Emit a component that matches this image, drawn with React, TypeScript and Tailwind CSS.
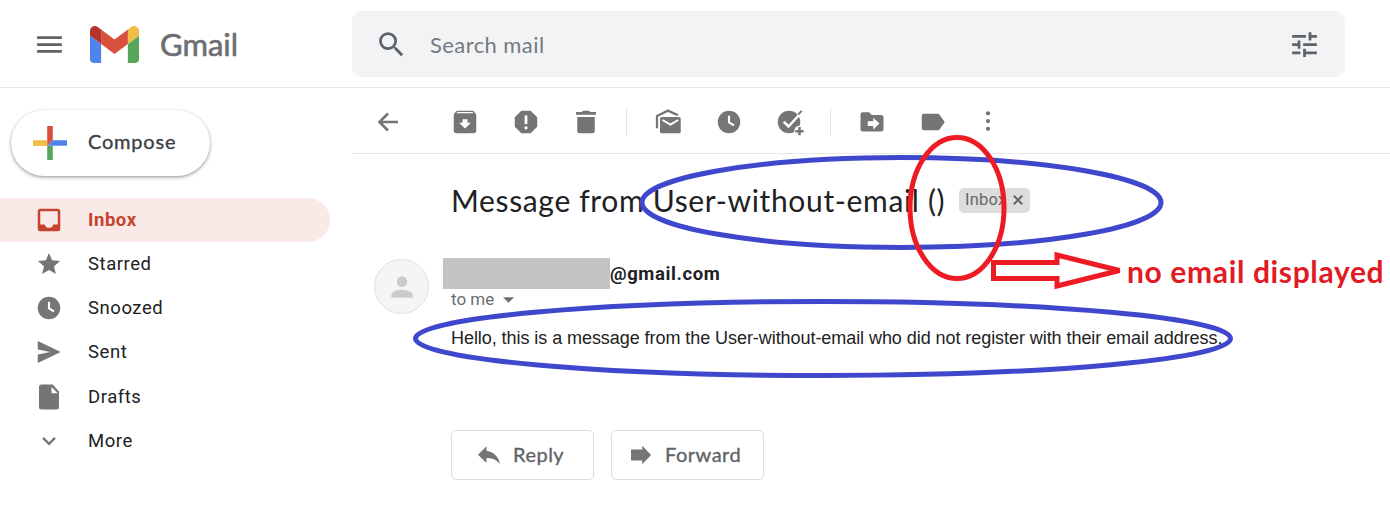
import type { ReactNode } from "react";

type IconProps = { className?: string; children: ReactNode };

function Icon({ className = "size-[30px]", children }: IconProps) {
  return (
    <svg viewBox="0 0 24 24" fill="currentColor" className={`shrink-0 ${className}`} aria-hidden="true">
      {children}
    </svg>
  );
}

const clock = (
  <>
    <circle cx="12" cy="12" r="9" />
    <path d="M12 7v5.3l4 2.4" fill="none" stroke="#fff" strokeWidth="1.7" />
  </>
);

function GmailLogo() {
  return (
    <svg viewBox="52 42 88 66" className="ml-7 h-[37px] w-[49px] shrink-0" aria-hidden="true">
      <path fill="#5084ed" d="M58 108h14V74L52 59v43c0 3.32 2.69 6 6 6" />
      <path fill="#57a55a" d="M120 108h14c3.32 0 6-2.69 6-6V59l-20 15" />
      <path fill="#efbe47" d="M120 48v26l20-15v-8c0-7.42-8.47-11.65-14.4-7.2" />
      <path fill="#d9503f" d="M72 74V48l24 18 24-18v26L96 92" />
      <path fill="#b3342a" d="M52 51v8l20 15V48l-5.6-4.2c-5.94-4.45-14.4-.22-14.4 7.2" />
    </svg>
  );
}

function Header() {
  return (
    <header className="flex h-[88px] shrink-0 items-start border-b border-[#e9e9e9]">
      <div className="flex h-[88px] w-[352px] shrink-0 items-center pl-[33px]">
        <Icon className="size-[33px] text-[#5f6368]">
          <path d="M3 18h18v-2H3v2zm0-5h18v-2H3v2zm0-7v2h18V6H3z" />
        </Icon>
        <div className="-ml-1 flex items-center">
          <GmailLogo />
          <span className="ml-[21px] font-['Lato'] text-[31px] leading-10 text-[#6b6e73] [-webkit-text-stroke:0.6px]">Gmail</span>
        </div>
      </div>
      <div className="mt-[11px] flex h-[66px] w-[993px] items-center rounded-[10px] bg-[#f1f3f4] pr-6 pl-[23px]">
        <Icon className="size-[33px] text-[#5f6368]">
          <path d="M15.5 14h-.79l-.28-.27A6.471 6.471 0 0 0 16 9.5 6.5 6.5 0 1 0 9.5 16c1.61 0 3.09-.59 4.23-1.57l.27.28v.79l5 4.99L20.49 19l-4.99-5zm-6 0C7.01 14 5 11.99 5 9.5S7.01 5 9.5 5 14 7.01 14 9.5 11.99 14 9.5 14z" />
        </Icon>
        <span className="ml-[22px] flex-1 font-['Lato'] text-[22px] tracking-[0.42px] text-[#777a7e]">Search mail</span>
        <Icon className="size-[33px] text-[#5f6368]">
          <path d="M3 17v2h6v-2H3zM3 5v2h10V5H3zm10 16v-2h8v-2h-8v-2h-2v6h2zM7 9v2H3v2h4v2h2V9H7zm14 4v-2H11v2h10zm-6-4h2V7h4V5h-4V3h-2v6z" />
        </Icon>
      </div>
    </header>
  );
}

const navItems: { label: string; icon: ReactNode }[] = [
  { label: "Starred", icon: <path d="M12 17.27 18.18 21l-1.64-7.03L22 9.24l-7.19-.61L12 2 9.19 8.63 2 9.24l5.46 4.73L5.82 21z" transform="translate(1.3 1.4) scale(.89)" /> },
  { label: "Snoozed", icon: clock },
  { label: "Sent", icon: <path d="M3 3.2 21.4 12 3 20.8V14l10-2-10-2z" /> },
  { label: "Drafts", icon: <path fillRule="evenodd" d="M6 2h9l5 5.5V20a2 2 0 0 1-2 2H6a2 2 0 0 1-2-2V4a2 2 0 0 1 2-2zm8 2v5h5z" /> },
  { label: "More", icon: <path d="M7.2 9.5 12 14.2l4.8-4.7" fill="none" stroke="currentColor" strokeWidth="1.9" /> },
];

function Sidebar() {
  return (
    <aside className="w-[352px] shrink-0 pt-[22px]">
      <button className="ml-[11px] flex h-[66px] w-[199px] items-center rounded-full bg-white pl-[22px] shadow-[0_1px_3px_rgba(60,64,67,.45),0_2px_4px_rgba(60,64,67,.15)]">
        <svg viewBox="0 0 34 34" className="size-[34px]" aria-hidden="true">
          <path fill="#d9503f" d="M14.2 0h5.6v14.2L14.2 20z" />
          <path fill="#efbe47" d="M0 14.2h14.2V20H0z" />
          <path fill="#57a55a" d="M14.2 19.8h5.6V34h-5.6z" />
          <path fill="#5084ed" d="M19.8 14.2H34v5.6H14.2z" />
        </svg>
        <span className="mb-1 ml-[21px] font-['Lato'] text-[20px] tracking-[0.8px] text-[#3c4043] [-webkit-text-stroke:0.35px]">Compose</span>
      </button>
      <nav className="mt-[22px] font-['Roboto'] text-[18.5px] leading-7 tracking-[0.55px] text-[#202124]">
        <div className="flex h-11 w-[330px] items-center rounded-r-full bg-[#f9e9e7] pl-[34px] font-bold text-[#c5442f]">
          <Icon>
            <path fillRule="evenodd" d="M5 3h14a2 2 0 0 1 2 2v14a2 2 0 0 1-2 2H5a2 2 0 0 1-2-2V5a2 2 0 0 1 2-2zm0 2v10.5h3.6a3.5 3.5 0 0 0 6.8 0H19V5z" />
          </Icon>
          <span className="ml-6">Inbox</span>
        </div>
        {navItems.map((item) => (
          <div key={item.label} className="flex h-[44.2px] items-center pl-[34px]">
            <Icon className="size-[30px] text-[#757575]">{item.icon}</Icon>
            <span className="ml-6">{item.label}</span>
          </div>
        ))}
      </nav>
    </aside>
  );
}

function Toolbar() {
  return (
    <div className="flex h-[66px] shrink-0 items-center border-b border-[#e9e9e9] pt-0.5 pl-[21px] text-[#757575]">
      <Icon>
        <path d="M20 12H5.5M12 5.200 5.200 12l6.800 6.800" fill="none" stroke="currentColor" strokeWidth="2.1" />
      </Icon>
      <Icon className="ml-[47px] size-[30px]">
        <path fillRule="evenodd" d="M20.54 5.23l-1.39-1.68C18.88 3.21 18.47 3 18 3H6c-.47 0-.88.21-1.16.55L3.46 5.23C3.17 5.57 3 6.02 3 6.5V19c0 1.1.9 2 2 2h14c1.1 0 2-.9 2-2V6.5c0-.48-.17-.93-.46-1.27zM12 17.2 7.2 12.5H10V9.8h4v2.7h2.8zM5.12 5l.81-1h12l.94 1z" />
      </Icon>
      <Icon className="ml-[30.5px] size-[30px]">
        <path stroke="currentColor" strokeWidth="1.6" strokeLinejoin="round" d="M8.6 3.8h6.8l4.8 4.8v6.8l-4.8 4.8H8.6l-4.8-4.8V8.6z" />
        <path fill="#fff" d="M10.9 6.7h2.2v7h-2.2z" />
        <circle cx="12" cy="16.6" r="1.3" fill="#fff" />
      </Icon>
      <Icon className="ml-[30.5px] size-[30px]">
        <path d="M4 4h4.6l1-1h4.8l1 1H20v2.2H4zM5 8h14v11a2 2 0 0 1-2 2H7a2 2 0 0 1-2-2z" />
      </Icon>
      <span className="ml-[25px] h-7 w-px bg-[#e6e6e6]" />
      <Icon className="ml-[26px] size-[30px]">
        <path d="M3.2 17V7.2L12 2.9l8 3.8" fill="none" stroke="currentColor" strokeWidth="1.8" strokeLinejoin="round" />
        <rect x="4.6" y="7" width="18.6" height="15" rx="2.4" fill="#fff" />
        <rect x="5.6" y="8" width="16.6" height="13" rx="1.5" />
        <path d="m7.6 10.4 6.3 3.7 6.3-3.7" fill="none" stroke="#fff" strokeWidth="1.6" />
      </Icon>
      <Icon className="ml-[31px] size-[30px]">{clock}</Icon>
      <Icon className="ml-[31px] size-[30px] overflow-visible">
        <circle cx="11.2" cy="12" r="9" />
        <path d="m7 11.8 3.800 3.800L21.500 4" fill="none" stroke="#fff" strokeWidth="2" />
        <path d="m18.600 6 2.800-2.900" fill="none" stroke="currentColor" strokeWidth="1.5" />
        <circle cx="19.6" cy="19.2" r="4.2" fill="#fff" />
        <path d="M19.6 16v6.6M16.3 19.3h6.6" fill="none" stroke="currentColor" strokeWidth="2" />
      </Icon>
      <span className="ml-[25px] h-7 w-px bg-[#e6e6e6]" />
      <Icon className="ml-[26px] size-[30px]">
        <path d="M4.6 4.2h5l2.200 2.200h7.600A1.800 1.800 0 0 1 21.200 8v10a1.800 1.800 0 0 1-1.800 1.600H4.600A1.800 1.800 0 0 1 2.800 18V6a1.800 1.800 0 0 1 1.800-1.800z" />
        <path fill="#fff" d="M8.600 11.300h4.400V8.500l5 4.700-5 4.700v-2.800H8.600z" />
      </Icon>
      <Icon className="ml-[31px] size-[30px]">
        <path d="M4.600 5.400h11.200c.6 0 1.100.3 1.400.7L21.400 12l-4.200 5.900c-.3.4-.8.7-1.400.7H4.600A1.700 1.700 0 0 1 3 17V7a1.700 1.700 0 0 1 1.600-1.600z" />
      </Icon>
      <Icon className="mb-0.5 ml-[25px] size-[30px]">
        <circle cx="12" cy="5.8" r="1.7" />
        <circle cx="12" cy="12" r="1.7" />
        <circle cx="12" cy="18.2" r="1.7" />
      </Icon>
    </div>
  );
}

function Message() {
  return (
    <main className="flex flex-col">
      <div className="mt-[23px] flex h-[46px] items-center pl-[99px]">
        <h1 className="w-[494px] font-['Lato'] text-[30px] tracking-[0.65px] whitespace-nowrap text-[#202124]">Message from User-without-email ()</h1>
        <span className="ml-3.5 flex h-[25px] w-[71px] items-center gap-[7px] rounded-[5px] bg-[#dddddd] pl-1.5 font-['Roboto'] text-[16.5px] tracking-[0.2px] text-[#666]">
          <span>Inbox</span>
          <svg viewBox="0 0 10 10" className="size-2.5" aria-hidden="true">
            <path d="m.8.8 8.400 8.400M9.200.8.8 9.200" stroke="#666" strokeWidth="2" />
          </svg>
        </span>
      </div>
      <section className="mt-[35px] flex pl-[22px]">
        <div className="mt-px flex size-[55px] shrink-0 items-center justify-center rounded-full border border-[#e0e0e0] bg-[#f5f5f5] text-[#cbcbcb]">
          <Icon className="size-[32px]">
            <path d="M12 12a4 4 0 1 0 0-8 4 4 0 0 0 0 8zm0 2c-2.670 0-8 1.340-8 4v2h16v-2c0-2.660-5.330-4-8-4z" />
          </Icon>
        </div>
        <div className="ml-3.5 flex flex-col">
          <div className="flex h-[30px] items-center">
            <span className="h-[31px] w-[167px] bg-[#c3c3c3]" />
            <span className="pt-0.5 font-['Roboto'] text-[18.5px] leading-7 font-bold tracking-[0.6px] text-[#202124]">@gmail.com</span>
          </div>
          <div className="flex h-6 items-center gap-[9px] pl-2 font-['Roboto'] text-[17px] text-[#6a6d70]">
            <span>to me</span>
            <svg viewBox="0 0 10 5" className="h-[6px] w-[11px]" aria-hidden="true"><path d="M0 0h10L5 5z" fill="#6a6d70" /></svg>
          </div>
          <p className="mt-[14px] pl-2 font-['Liberation_Sans'] text-[18px] leading-6 tracking-[-0.06px] whitespace-nowrap text-[#222]">Hello, this is a message from the User-without-email who did not register with their email address.</p>
        </div>
      </section>
      <div className="mt-20 flex gap-[17px] pl-[99px] font-['Lato'] text-[20px] tracking-[0.5px] text-[#5f6368] [-webkit-text-stroke:0.35px]">
        <button className="flex h-[50px] w-[143px] items-center rounded-[5px] border border-[#dadce0] pl-[21px]">
          <Icon className="size-[30px] text-[#757575]">
            <path stroke="none" d="M10.800 8.600V5L4 11.800l6.800 6.600v-4c4.600-.4 7.800 1.200 10.800 4.800-1.200-5.800-4.800-9.600-10.800-10.600z" />
          </Icon>
          <span className="mb-[3px] ml-2.5">Reply</span>
        </button>
        <button className="flex h-[50px] w-[153px] items-center rounded-[5px] border border-[#dadce0] pl-[14px]">
          <Icon className="size-[30px] text-[#757575]">
            <path stroke="none" d="M4 7.600h9V4.600L20 12l-7 7.400v-3H4z" />
          </Icon>
          <span className="mb-[3px] ml-[9px]">Forward</span>
        </button>
      </div>
    </main>
  );
}

function Annotations() {
  return (
    <div className="pointer-events-none absolute inset-0">
      <svg viewBox="0 0 1390 529" className="h-[529px] w-[1390px]" fill="none" strokeWidth="5" aria-hidden="true">
        <ellipse cx="901.5" cy="202.5" rx="259.5" ry="45" stroke="#3f48cc" />
        <ellipse cx="823" cy="338.5" rx="407.5" ry="37" stroke="#3f48cc" />
        <ellipse cx="957" cy="208" rx="47" ry="70.5" stroke="#ed1c24" />
        <path d="M993.5 262.500h63.500V255L1119.500 270.500l-62.500 15.500v-7.500h-63.500z" stroke="#ed1c24" />
      </svg>
      <span className="absolute top-[254px] left-[1127px] font-['Lato'] text-[30px] leading-[34px] font-bold tracking-[0.64px] whitespace-nowrap text-[#e01b24]">no email displayed</span>
    </div>
  );
}

export default function App() {
  return (
    <div className="relative flex h-[529px] w-[1390px] flex-col overflow-hidden bg-white">
      <Header />
      <div className="flex min-h-0 flex-1">
        <Sidebar />
        <div className="flex flex-1 flex-col">
          <Toolbar />
          <Message />
        </div>
      </div>
      <Annotations />
    </div>
  );
}
